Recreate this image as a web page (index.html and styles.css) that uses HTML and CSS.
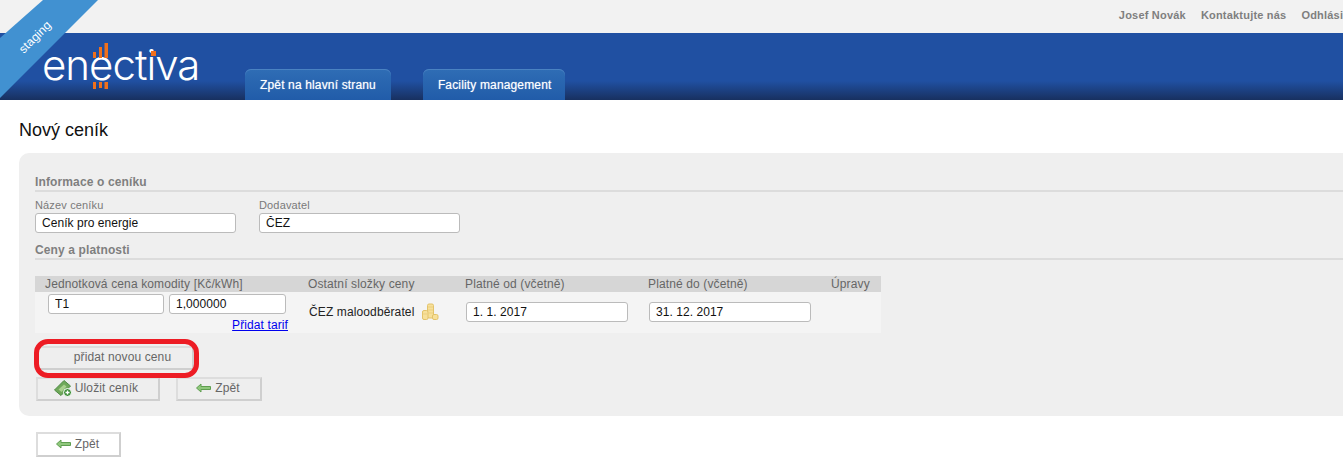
FILE: index.html
```html
<!DOCTYPE html>
<html lang="cs">
<head>
<meta charset="utf-8">
<title>Nový ceník</title>
<link rel="stylesheet" href="styles.css">
</head>
<body>
<div class="ribbon"><span class="ribbon-text">staging</span></div>
<div class="topbar">
  <a class="toplink" href="#">Josef Novák</a>
  <a class="toplink" href="#">Kontaktujte nás</a>
  <a class="toplink" href="#">Odhlásit</a>
</div>
<header class="header">
  <div class="logo">
    <span class="logo-text">enectiva</span>
    <svg class="logo-marks" width="160" height="50" viewBox="0 0 160 50">
      <g fill="#f0701c">
        <rect x="50" y="9" width="3" height="6"/><rect x="56" y="4" width="3" height="11"/><rect x="61.500" y="0" width="3.500" height="15"/>
        <rect x="50" y="39" width="3" height="7"/><rect x="56" y="39" width="3" height="6"/><rect x="61.500" y="39" width="3.500" height="7"/>
        <rect x="108" y="8" width="5" height="5"/>
      </g>
    </svg>
  </div>
  <nav class="tabs">
    <a class="tab" href="#">Zpět na hlavní stranu</a>
    <a class="tab" href="#">Facility management</a>
  </nav>
</header>
<main class="main">
  <h1 class="title">Nový ceník</h1>
  <section class="panel">
    <h2 class="section-title">Informace o ceníku</h2>
    <div class="fields">
      <label class="field"><span class="field-label">Název ceníku</span><input class="input input-wide" value="Ceník pro energie"></label>
      <label class="field"><span class="field-label">Dodavatel</span><input class="input input-wide" value="ČEZ"></label>
    </div>
    <h2 class="section-title section-title-second">Ceny a platnosti</h2>
    <div class="price-table">
      <div class="price-head">
        <div class="head-first">Jednotková cena komodity [Kč/kWh]</div>
        <div>Ostatní složky ceny</div>
        <div>Platné od (včetně)</div>
        <div>Platné do (včetně)</div>
        <div>Úpravy</div>
      </div>
      <div class="price-row">
        <div class="tariff">
          <div class="tariff-inputs">
            <input class="input input-t" value="T1">
            <input class="input input-v" value="1,000000">
          </div>
          <a class="add-tariff" href="#">Přidat tarif</a>
        </div>
        <div class="other">
          <span>ČEZ maloodběratel</span>
          <svg width="18" height="18" viewBox="0 0 18 18">
            <g fill="#f7e09a" stroke="#e3c36a" stroke-width="1">
              <rect x="6.500" y="1" width="6" height="14" rx="1.500"/>
              <rect x="1.500" y="7.500" width="5.500" height="9" rx="1.500"/>
              <rect x="11.500" y="11.500" width="5.500" height="5" rx="1.500"/>
            </g>
            <path d="M7 4h5M7 7h5M7 10h5M2 11h4" stroke="#eccf7e" stroke-width="1" fill="none"/>
          </svg>
        </div>
        <div class="date-cell"><input class="input input-date" value="1. 1. 2017"></div>
        <div class="date-cell"><input class="input input-date" value="31. 12. 2017"></div>
        <div></div>
      </div>
    </div>
    <div class="add-wrap">
      <button class="btn btn-add" type="button">přidat novou cenu</button>
      <div class="highlight"></div>
    </div>
    <div class="actions">
      <button class="btn btn-save" type="button">
        <svg width="18" height="18" viewBox="0 0 18 18">
          <path d="M.5 11 10 1.500l6.500 5.500L7 16.500z" fill="#6fa85a" stroke="#4f8a44" stroke-width="1"/>
          <path d="M4.500 10.500 10 5.500l2.500 2L7.500 13z" fill="#a9d08f"/>
          <circle cx="13.500" cy="13.500" r="4" fill="#3f8f3a" stroke="#fff" stroke-width="1"/>
          <path d="M11.500 13.500h4M13.500 11.500v4" stroke="#fff" stroke-width="1.300"/>
        </svg>
        <span>Uložit ceník</span>
      </button>
      <button class="btn btn-back" type="button">
        <svg width="15" height="10" viewBox="0 0 15 10"><path d="M.5 5 5 1v2.500h9.500v3H5V9z" fill="#8fc77c" stroke="#5f9e50" stroke-width="1"/></svg>
        <span>Zpět</span>
      </button>
    </div>
  </section>
  <button class="btn btn-back btn-white" type="button">
    <svg width="15" height="10" viewBox="0 0 15 10"><path d="M.5 5 5 1v2.500h9.500v3H5V9z" fill="#8fc77c" stroke="#5f9e50" stroke-width="1"/></svg>
    <span>Zpět</span>
  </button>
</main>
</body>
</html>
```
FILE: styles.css
```css
* { box-sizing: border-box; }
html, body { margin: 0; padding: 0; }
body {
  width: 1343px;
  height: 469px;
  overflow: hidden;
  position: relative;
  background: #fff;
  font-family: "Liberation Sans", Arial, sans-serif;
  font-size: 12px;
  color: #555;
}
.ribbon {
  position: absolute;
  top: 0;
  left: 0;
  width: 98px;
  height: 98px;
  z-index: 5;
  background: #4191d1;
  clip-path: polygon(43px 0, 98px 0, 0 98px, 0 38px);
}
.ribbon-text {
  position: absolute;
  left: 13px;
  top: 30px;
  width: 44px;
  text-align: center;
  color: #fff;
  font-size: 12px;
  line-height: 14px;
  letter-spacing: .15px;
  transform: rotate(-45deg);
}
.topbar {
  height: 33px;
  background: #f2f2f2;
  display: flex;
  justify-content: flex-end;
  align-items: flex-start;
  gap: 15px;
  padding: 9px 0 0;
  margin-right: -4px;
}
.toplink {
  color: #7f7f7f;
  font-size: 11px;
  line-height: 13px;
  font-weight: bold;
  letter-spacing: .2px;
  text-decoration: none;
  white-space: nowrap;
}
.header {
  height: 67px;
  background: linear-gradient(#2050a2 0, #2050a2 48px, #18305f 67px);
  display: flex;
  position: relative;
}
.logo {
  position: relative;
  width: 245px;
  flex: none;
}
.logo-text {
  position: absolute;
  left: 42px;
  top: 7px;
  font-family: "Inter", sans-serif;
  font-weight: 300;
  font-size: 42px;
  line-height: 50px;
  letter-spacing: -1px;
  color: #fff;
}
.logo-marks {
  position: absolute;
  left: 43px;
  top: 10px;
}
.tabs {
  display: flex;
  gap: 32px;
  align-items: flex-end;
  height: 100%;
}
.tab {
  display: block;
  height: 31px;
  padding: 9px 15px 0 15px;
  border-radius: 6px 6px 0 0;
  background: linear-gradient(#2f6db5, #215ca9);
  box-shadow: inset 0 1px 0 #4a82c2;
  color: #fff;
  font-size: 12px;
  line-height: 15px;
  letter-spacing: .15px;
  text-decoration: none;
  white-space: nowrap;
  text-shadow: 0 0 1px rgba(255,255,255,.6);
}
.tab:last-child { padding-right: 14px; }
.main { padding: 0 0 0 19px; }
.title {
  margin: 0;
  padding: 20px 0 0;
  height: 53px;
  font-size: 18px;
  line-height: 20px;
  font-weight: normal;
  color: #111;
}
.panel {
  width: 1340px;
  height: 263px;
  background: #efefef;
  border-radius: 10px;
  padding: 23px 0 0 16px;
}
.section-title {
  margin: 0;
  height: 16px;
  font-size: 12px;
  line-height: 13px;
  font-weight: bold;
  letter-spacing: .13px;
  color: #7f7f7f;
  border-bottom: 2px solid #dcdcdc;
}
.section-title-second { margin-top: 11px; }
.fields {
  display: flex;
  gap: 23px;
  padding-top: 7px;
}
.field { display: block; }
.field-label {
  display: block;
  height: 14px;
  font-size: 11px;
  line-height: 12px;
  letter-spacing: .15px;
  color: #7a7a7a;
}
.input {
  display: block;
  height: 20px;
  padding: 0 6px;
  border: 1px solid #bbb;
  border-radius: 3px;
  background: #fff;
  font-family: "Liberation Sans", Arial, sans-serif;
  font-size: 12px;
  letter-spacing: .05px;
  color: #111;
  outline: none;
}
.input-wide { width: 201px; }
.input-t { width: 116px; }
.input-v { width: 117px; }
.input-date { width: 162px; }
.price-table {
  width: 846px;
  margin-top: 16px;
  background: #f4f4f4;
}
.price-head, .price-row {
  display: grid;
  grid-template-columns: 273px 157px 183px 183px 50px;
}
.price-head {
  height: 16px;
  background: #d6d6d6;
  line-height: 16px;
  letter-spacing: .13px;
  color: #666;
}
.head-first { padding-left: 10px; }
.price-row { height: 41px; }
.tariff { padding: 2px 0 0 13px; }
.tariff-inputs { display: flex; gap: 5px; }
.add-tariff {
  display: block;
  width: 240px;
  margin-top: 4px;
  text-align: right;
  color: #00e;
  line-height: 14px;
  letter-spacing: .1px;
}
.other {
  display: flex;
  align-items: center;
  gap: 7px;
  padding: 1px 0 0 1px;
  letter-spacing: .12px;
  color: #222;
  height: 38px;
}
.date-cell { padding: 10px 0 0 1px; }
.add-wrap {
  position: relative;
  width: 158px;
  margin: 13px 0 0 1px;
}
.btn {
  display: flex;
  align-items: center;
  justify-content: center;
  gap: 3px;
  padding: 0 0 2px;
  border: 2px solid #ddd;
  border-right-color: #cfcfcf;
  border-bottom-color: #cfcfcf;
  border-radius: 0;
  background: #eee;
  font-family: "Liberation Sans", Arial, sans-serif;
  font-size: 12px;
  letter-spacing: .12px;
  color: #666;
}
.btn-add { width: 158px; height: 24px; padding-left: 15px; }
.highlight {
  position: absolute;
  left: -2px;
  top: -7px;
  width: 165px;
  height: 39px;
  border: 5px solid #ed1c24;
  border-radius: 14px;
}
.actions {
  display: flex;
  gap: 16px;
  margin: 7px 0 0 1px;
}
.btn-save { width: 124px; height: 24px; padding-right: 4px; }
.btn-back { width: 86px; height: 24px; padding-right: 2px; gap: 4px; }
.btn-white {
  width: 85px;
  height: 25px;
  margin: 16px 0 0 17px;
  padding-right: 2px;
  background: #fff;
}
```
